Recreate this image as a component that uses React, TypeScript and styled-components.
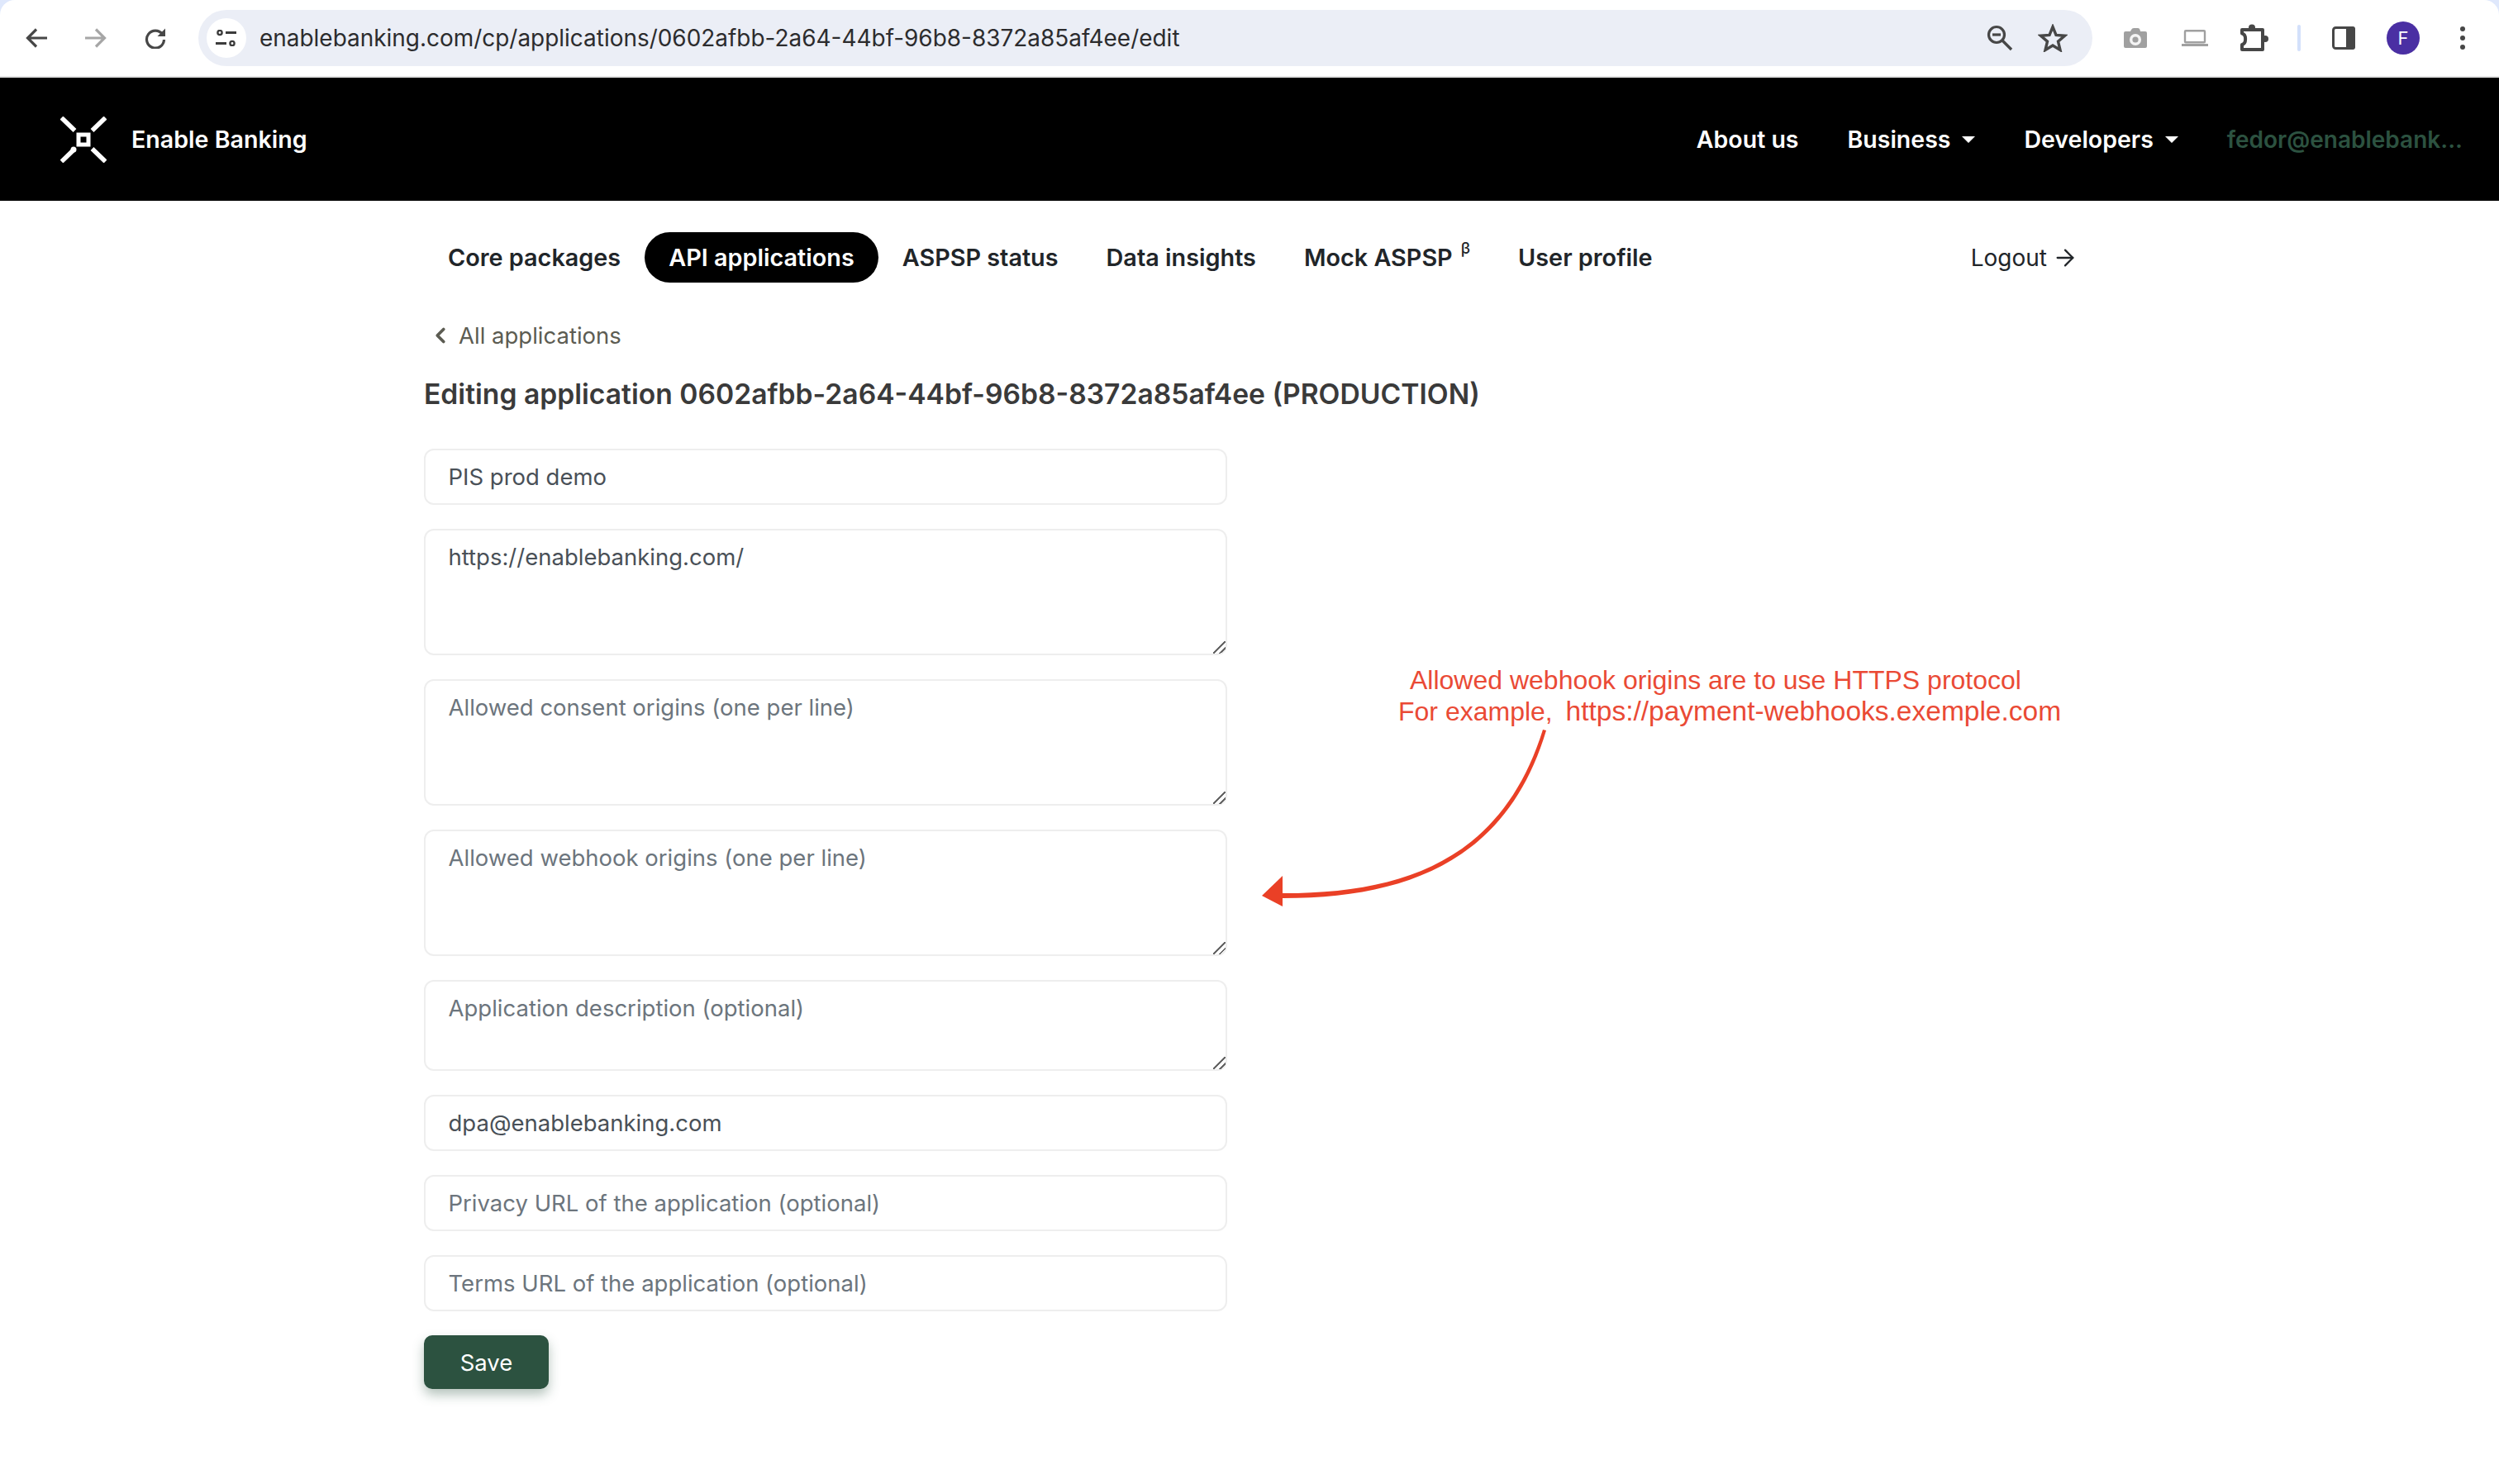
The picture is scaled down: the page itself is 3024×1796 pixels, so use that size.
import styled, { createGlobalStyle } from "styled-components";
import { ArrowRight, ChevronLeft } from "lucide-react";

const GlobalStyle = createGlobalStyle`
    html, body {
        margin: 0;
        padding: 0;
        background: #fff;
    }

    body {
        font-family: Inter, "Liberation Sans", sans-serif;
        overflow: hidden;
    }

    * {
        box-sizing: border-box;
    }
`;

const Page = styled.div`
    position: relative;
    width: 3024px;
    height: 1796px;
    background: #fff;
    overflow: hidden;
`;

const WindowTop = styled.div`
    background: #dfe8fc;
`;

const BrowserBar = styled.div`
    display: flex;
    align-items: center;
    height: 92px;
    padding: 0 8px;
    background: #fff;
    border-radius: 18px 18px 0 0;
`;

const BarEdge = styled.div`
    height: 2px;
    background: #e2e2e2;
`;

const ToolIcon = styled.div<{ $muted?: boolean }>`
    display: flex;
    align-items: center;
    justify-content: center;
    flex: none;
    width: 72px;
    height: 72px;
    color: ${(p) => (p.$muted ? "#a6a6a6" : "#474747")};
`;

const Omnibox = styled.div`
    display: flex;
    align-items: center;
    flex: none;
    width: 2292px;
    height: 68px;
    margin: 0 16px;
    padding: 0 16px 0 10px;
    border-radius: 34px;
    background: #ebeef6;
`;

const TuneBadge = styled.div`
    display: flex;
    align-items: center;
    justify-content: center;
    flex: none;
    width: 48px;
    height: 48px;
    border-radius: 50%;
    background: #fff;
    color: #3c3c3c;
`;

const UrlText = styled.span`
    margin-left: 16px;
    font-size: 27.95px;
    color: #2c2c2e;
    white-space: nowrap;
`;

const OmniActions = styled.div`
    display: flex;
    margin-left: auto;
`;

const OmniIcon = styled.div`
    display: flex;
    align-items: center;
    justify-content: center;
    width: 64px;
    height: 64px;
`;

const BarSeparator = styled.div`
    flex: none;
    width: 4px;
    height: 32px;
    margin: 0 16px;
    border-radius: 2px;
    background: #d3e0fb;
`;

const Avatar = styled.div`
    display: flex;
    align-items: center;
    justify-content: center;
    width: 40px;
    height: 40px;
    border-radius: 50%;
    background: #4a2fa3;
    color: #fff;
    font-size: 22px;
`;

const Header = styled.header`
    display: flex;
    align-items: center;
    height: 149px;
    padding: 0 44px 0 73px;
    background: #000;
    color: #fff;
`;

const Brand = styled.div`
    display: flex;
    align-items: center;
    gap: 30px;
    font-size: 28.6px;
    font-weight: 600;
`;

const HeaderNav = styled.nav`
    display: flex;
    align-items: center;
    gap: 59px;
    margin-left: auto;
    font-size: 28.5px;
    font-weight: 600;
`;

const HeaderLink = styled.a`
    display: flex;
    align-items: center;
    gap: 14px;
    white-space: nowrap;
`;

const Caret = styled.span`
    width: 0;
    height: 0;
    border-left: 8px solid transparent;
    border-right: 8px solid transparent;
    border-top: 8px solid #fff;
`;

const UserEmail = styled.a`
    color: #2c5240;
    font-size: 28px;
    white-space: nowrap;
`;

const Content = styled.main`
    width: 1998px;
    margin: 0 auto;
    padding-top: 38px;
`;

const SubNav = styled.nav`
    display: flex;
    align-items: center;
    height: 61px;
`;

const Tab = styled.a<{ $active?: boolean }>`
    display: flex;
    align-items: center;
    height: 61px;
    padding: 0 29px;
    border-radius: 31px;
    background: ${(p) => (p.$active ? "#000" : "transparent")};
    color: ${(p) => (p.$active ? "#fff" : "#212529")};
    font-size: 28.8px;
    font-weight: 600;
    white-space: nowrap;
`;

const Beta = styled.sup`
    align-self: flex-start;
    margin: 10px 0 0 10px;
    font-size: 19px;
    font-weight: 500;
    line-height: 1;
`;

const Logout = styled.a`
    display: flex;
    align-items: center;
    gap: 6px;
    margin-left: auto;
    margin-right: -4px;
    color: #212529;
    font-size: 28px;
    font-weight: 400;
`;

const BackLink = styled.a`
    display: flex;
    align-items: center;
    gap: 7px;
    height: 40px;
    margin: 44px 0 0 5px;
    color: #5c5c52;
    font-size: 27.5px;
`;

const Title = styled.h1`
    margin: 29px 0 0;
    color: #3a3a3a;
    font-size: 33.65px;
    font-weight: 600;
    line-height: 44px;
    white-space: nowrap;
`;

const Form = styled.form`
    display: flex;
    flex-direction: column;
    gap: 29px;
    width: 972px;
    margin-top: 44px;
`;

const fieldStyles = `
    display: block;
    width: 100%;
    border: 2px solid #eeeeee;
    border-radius: 12px;
    background: #fff;
    color: #495057;
    font-family: Inter, "Liberation Sans", sans-serif;
    font-size: 27.5px;
    outline: none;

    &::placeholder {
        color: #6c757d;
        opacity: 1;
    }
`;

const TextInput = styled.input`
    ${fieldStyles}
    height: 68px;
    padding: 0 27.5px;
`;

const TextArea = styled.textarea<{ $height: number }>`
    ${fieldStyles}
    height: ${(p) => p.$height}px;
    padding: 13px 27.5px;
    line-height: 38px;

    &::-webkit-resizer {
        background: linear-gradient(
            135deg,
            transparent 46%,
            #666 46% 54%,
            transparent 54% 72%,
            #666 72% 80%,
            transparent 80%
        );
    }
`;

const SaveButton = styled.button`
    width: 151px;
    height: 65px;
    border: 0;
    border-radius: 10px;
    background: #2c5240;
    color: #fff;
    font-family: Inter, "Liberation Sans", sans-serif;
    font-size: 27.5px;
    box-shadow: 0 7px 14px rgba(44, 82, 64, 0.35);
`;

const Annotation = styled.div`
    position: absolute;
    top: 804px;
    left: 1692px;
    color: #ea4a35;
    font-family: "Liberation Sans", Arial, sans-serif;
    font-size: 32px;
    line-height: 38px;
    white-space: pre;
`;

const AnnotationFirstLine = styled.div`
    padding-left: 14px;
`;

const AnnotationUrl = styled.span`
    margin-left: -2px;
    font-size: 33.5px;
`;

const ArrowDrawing = styled.svg`
    position: absolute;
    top: 870px;
    left: 1510px;
`;

const BackIcon = () => (
    <svg width="26" height="24" viewBox="0 0 26 24" fill="none" stroke="currentColor" strokeWidth="3.2">
        <path d="M26 12H3M13 1.5 2.5 12 13 22.5" />
    </svg>
);

const ForwardIcon = () => (
    <svg width="26" height="24" viewBox="0 0 26 24" fill="none" stroke="currentColor" strokeWidth="3.2">
        <path d="M0 12H23M13 1.5 23.5 12 13 22.5" />
    </svg>
);

const ReloadIcon = () => (
    <svg width="26" height="26" viewBox="0 0 26 26" fill="none">
        <path d="M21.5 8.5A10.5 10.5 0 1 0 23.5 15" stroke="currentColor" strokeWidth="3.2" />
        <path d="M25 1.5V11H15.5Z" fill="currentColor" />
    </svg>
);

const TuneIcon = () => (
    <svg width="26" height="20" viewBox="0 0 26 20" fill="none" stroke="currentColor">
        <circle cx="5" cy="3.5" r="2.6" strokeWidth="2.4" />
        <path d="M12 3.5h13M0 16.5h13" strokeWidth="3" />
        <circle cx="20" cy="16.5" r="2.6" strokeWidth="2.4" />
    </svg>
);

const ZoomOutIcon = () => (
    <svg width="32" height="32" viewBox="0 0 32 32" fill="none" stroke="#474747">
        <circle cx="12" cy="12" r="9.5" strokeWidth="3.2" />
        <path d="M7 12h10" strokeWidth="3.2" />
        <path d="M19 19 30 30" strokeWidth="3.4" />
    </svg>
);

const StarIcon = () => (
    <svg width="36" height="34" viewBox="0 0 36 34" fill="none" stroke="#474747" strokeWidth="3.4">
        <path d="M18 3.5 22 13.5 32.5 14.3 24.5 21.2 27 31.5 18 26 9 31.5 11.5 21.2 3.5 14.3 14 13.5Z" />
    </svg>
);

const CameraIcon = () => (
    <svg width="28" height="26" viewBox="0 0 28 26">
        <path d="M2 5h6l1-2q1-2 3-2h5q2 0 2.5 2l.5 2h6q2 0 2 2v16q0 2-2 2H2q-2 0-2-2V7q0-2 2-2z" fill="#a0a0a0" />
        <circle cx="14" cy="15" r="7" fill="#f4f4f4" />
        <circle cx="14" cy="15" r="3.6" fill="#a0a0a0" />
    </svg>
);

const LaptopIcon = () => (
    <svg width="32" height="20" viewBox="0 0 32 20" fill="none" stroke="#a0a0a0">
        <rect x="4" y="1.2" width="24" height="14" rx="1" strokeWidth="2.4" />
        <path d="M0 18.5h32" strokeWidth="3" />
    </svg>
);

const PuzzleIcon = () => (
    <svg width="36" height="34" viewBox="0 0 36 34" fill="#474747" stroke="#474747">
        <circle cx="15" cy="4.5" r="4" stroke="none" />
        <circle cx="31" cy="18" r="4" stroke="none" />
        <path d="M3 7H28V31H3V25C8.5 24 8.5 12.5 3 11.5Z" fill="none" strokeWidth="4" strokeLinejoin="round" />
    </svg>
);

const SidePanelIcon = () => (
    <svg width="28" height="28" viewBox="0 0 28 28">
        <rect x="1.5" y="1.5" width="25" height="25" rx="3" fill="#fff" stroke="#474747" strokeWidth="3" />
        <path d="M17 0h8q3 0 3 3v22q0 3-3 3h-8z" fill="#474747" />
    </svg>
);

const DotsIcon = () => (
    <svg width="8" height="30" viewBox="0 0 8 30" fill="#474747">
        <circle cx="4" cy="4" r="3" />
        <circle cx="4" cy="15" r="3" />
        <circle cx="4" cy="26" r="3" />
    </svg>
);

const LogoMark = () => (
    <svg width="56" height="56" viewBox="0 0 56 56" fill="none" stroke="#fff">
        <path d="M1.5 1.5 17.5 17M54.5 1.5 38.5 17M54.5 54.5 38.5 39M1.5 54.5 16 40.5" strokeWidth="5.5" />
        <circle cx="16" cy="40" r="3.5" fill="#fff" stroke="none" />
        <rect x="22" y="22" width="12" height="12" strokeWidth="5" />
    </svg>
);

const fields: { kind: "input" | "area"; value?: string; placeholder?: string; height?: number }[] = [
    { kind: "input", value: "PIS prod demo" },
    { kind: "area", value: "https://enablebanking.com/", height: 153 },
    { kind: "area", placeholder: "Allowed consent origins (one per line)", height: 153 },
    { kind: "area", placeholder: "Allowed webhook origins (one per line)", height: 153 },
    { kind: "area", placeholder: "Application description (optional)", height: 110 },
    { kind: "input", value: "dpa@enablebanking.com" },
    { kind: "input", placeholder: "Privacy URL of the application (optional)" },
    { kind: "input", placeholder: "Terms URL of the application (optional)" },
];

const tabs = ["Core packages", "API applications", "ASPSP status", "Data insights"];

export default function App() {
    return (
        <Page>
            <GlobalStyle />
            <WindowTop>
                <BrowserBar>
                    <ToolIcon><BackIcon /></ToolIcon>
                    <ToolIcon $muted><ForwardIcon /></ToolIcon>
                    <ToolIcon><ReloadIcon /></ToolIcon>
                    <Omnibox>
                        <TuneBadge><TuneIcon /></TuneBadge>
                        <UrlText>enablebanking.com/cp/applications/0602afbb-2a64-44bf-96b8-8372a85af4ee/edit</UrlText>
                        <OmniActions>
                            <OmniIcon><ZoomOutIcon /></OmniIcon>
                            <OmniIcon><StarIcon /></OmniIcon>
                        </OmniActions>
                    </Omnibox>
                    <ToolIcon $muted><CameraIcon /></ToolIcon>
                    <ToolIcon $muted><LaptopIcon /></ToolIcon>
                    <ToolIcon><PuzzleIcon /></ToolIcon>
                    <BarSeparator />
                    <ToolIcon><SidePanelIcon /></ToolIcon>
                    <ToolIcon><Avatar>F</Avatar></ToolIcon>
                    <ToolIcon><DotsIcon /></ToolIcon>
                </BrowserBar>
            </WindowTop>
            <BarEdge />
            <Header>
                <Brand>
                    <LogoMark />
                    Enable Banking
                </Brand>
                <HeaderNav>
                    <HeaderLink>About us</HeaderLink>
                    <HeaderLink>Business <Caret /></HeaderLink>
                    <HeaderLink>Developers <Caret /></HeaderLink>
                    <UserEmail>fedor@enablebank...</UserEmail>
                </HeaderNav>
            </Header>
            <Content>
                <SubNav>
                    {tabs.map((tab) => (
                        <Tab key={tab} $active={tab === "API applications"}>{tab}</Tab>
                    ))}
                    <Tab>Mock ASPSP<Beta>β</Beta></Tab>
                    <Tab>User profile</Tab>
                    <Logout>Logout <ArrowRight size={32} strokeWidth={1.7} /></Logout>
                </SubNav>
                <BackLink><ChevronLeft size={30} strokeWidth={3} />All applications</BackLink>
                <Title>Editing application 0602afbb-2a64-44bf-96b8-8372a85af4ee (PRODUCTION)</Title>
                <Form>
                    {fields.map((field, index) =>
                        field.kind === "input" ? (
                            <TextInput key={index} readOnly value={field.value ?? ""} placeholder={field.placeholder} />
                        ) : (
                            <TextArea key={index} readOnly $height={field.height ?? 153} value={field.value ?? ""} placeholder={field.placeholder} />
                        )
                    )}
                    <SaveButton type="button">Save</SaveButton>
                </Form>
            </Content>
            <Annotation>
                <AnnotationFirstLine>Allowed webhook origins are to use HTTPS protocol</AnnotationFirstLine>
                {"For example,  "}
                <AnnotationUrl>https://payment-webhooks.exemple.com</AnnotationUrl>
            </Annotation>
            <ArrowDrawing width="380" height="240" viewBox="1510 870 380 240">
                <path d="M1867 883C1818 1040 1700 1082 1548 1081L1548 1087C1702 1088 1824 1042 1871 884Z" fill="#ea4026" />
                <path d="M1527 1084 1552 1060V1097Z" fill="#ea4026" />
            </ArrowDrawing>
        </Page>
    );
}
